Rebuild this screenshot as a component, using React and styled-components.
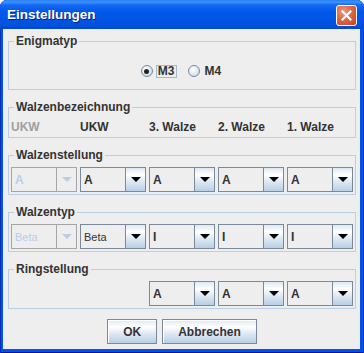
import React from 'react';
import styled, { createGlobalStyle } from 'styled-components';

const GlobalStyle = createGlobalStyle`
  html, body {
    margin: 0;
    padding: 0;
    background: #ffffff;
  }
  body {
    font-family: "Liberation Sans", Arial, sans-serif;
  }
`;

const Window = styled.div`
  width: 364px;
  height: 353px;
  box-sizing: border-box;
  display: flex;
  flex-direction: column;
  border-radius: 7px 7px 0 0;
  overflow: hidden;
  background: #0052e8;
  box-shadow: inset 1px 0 0 #0a2fb8, inset -1px 0 0 #0a2fb8, inset 0 -1px 0 #00168c;
`;

const TitleBar = styled.div`
  height: 29px;
  flex-shrink: 0;
  display: flex;
  justify-content: space-between;
  padding: 0 7px;
  background: linear-gradient(
    to bottom,
    #2a7cf0 0px,
    #3d92ff 2px,
    #1468f2 5px,
    #0058ea 12px,
    #0055e4 20px,
    #0050dc 26px,
    #0046cc 29px
  );
`;

const Title = styled.span`
  margin-top: 7px;
  font-weight: bold;
  font-size: 13.5px;
  line-height: 15px;
  color: #ffffff;
  text-shadow: 1px 1px 0 #0a1f8c;
`;

const CloseButton = styled.div`
  margin-top: 5px;
  width: 21px;
  height: 21px;
  box-sizing: border-box;
  border: 1px solid #ffffff;
  border-radius: 3px;
  background: radial-gradient(circle at 35% 30%, #ec9a80 0%, #dd6846 45%, #c4411f 100%);
  display: flex;
  align-items: center;
  justify-content: center;
`;

const Client = styled.div`
  flex: 1;
  margin: 0 4px 4px 3px;
  background: #eeeeee;
  padding: 5px 4px 0 5px;
  display: flex;
  flex-direction: column;
  gap: 10px;
`;

const Group = styled.fieldset`
  margin: 0;
  min-width: 0;
  padding: 5px 2px 2px 2px;
  border: 1px solid #b8cfe5;
`;

const Legend = styled.legend`
  margin-left: 3px;
  padding: 0 2px;
  font-weight: bold;
  font-size: 12px;
  line-height: 14px;
  color: #333333;
`;

const RadioRow = styled.div`
  height: 34px;
  box-sizing: border-box;
  padding-top: 2px;
  display: flex;
  align-items: center;
  justify-content: center;
  gap: 11px;
`;

const RadioItem = styled.label`
  display: flex;
  align-items: center;
  gap: 3px;
`;

const RadioCircle = styled.span`
  width: 12px;
  height: 12px;
  box-sizing: border-box;
  border-radius: 50%;
  border: 1px solid #7a8a99;
  background: radial-gradient(circle at 40% 35%, #ffffff 0%, #e4ecf5 45%, #b8cfe5 100%);
  display: flex;
  align-items: center;
  justify-content: center;
`;

const RadioDot = styled.span`
  width: 5px;
  height: 5px;
  border-radius: 50%;
  background: #222222;
`;

const RadioText = styled.span`
  padding: 0 1px;
  border: 1px solid ${(p) => (p.$focused ? '#a3b8cc' : 'transparent')};
  font-weight: bold;
  font-size: 12px;
  line-height: 11px;
  color: #333333;
`;

const Columns = styled.div`
  display: grid;
  grid-template-columns: repeat(5, 66px);
  column-gap: 3px;
`;

const ColumnLabel = styled.span`
  font-weight: bold;
  font-size: 12px;
  line-height: 16px;
  color: ${(p) => (p.$disabled ? '#a0a0a0' : '#333333')};
  white-space: nowrap;
`;

const Combo = styled.div`
  grid-column-start: ${(p) => p.$col || 'auto'};
  height: 25px;
  box-sizing: border-box;
  border: 1px solid ${(p) => (p.$disabled ? '#a6a6a6' : '#7a8a99')};
  background: #eeeeee;
  display: flex;
`;

const ComboValue = styled.div`
  flex: 1;
  padding-left: 3px;
  display: flex;
  align-items: center;
  font-weight: ${(p) => (p.$plain ? 'normal' : 'bold')};
  font-size: ${(p) => (p.$plain ? '11px' : '12px')};
  color: ${(p) => (p.$disabled ? '#b8cfe5' : '#333333')};
`;

const ArrowButton = styled.div`
  width: 19px;
  flex-shrink: 0;
  border-left: 1px solid ${(p) => (p.$disabled ? '#a6a6a6' : '#7a8a99')};
  background: ${(p) =>
    p.$disabled
      ? '#eeeeee'
      : 'linear-gradient(to bottom, #dde8f3 0%, #ffffff 30%, #dde8f3 60%, #b8cfe5 100%)'};
  display: flex;
  align-items: center;
  justify-content: center;
`;

const Arrow = styled.span`
  width: 0;
  height: 0;
  border-left: 5px solid transparent;
  border-right: 5px solid transparent;
  border-top: 5px solid ${(p) => (p.$disabled ? '#b8cfe5' : '#000000')};
`;

const ButtonRow = styled.div`
  display: flex;
  justify-content: center;
  gap: 5px;
`;

const Button = styled.button`
  height: 25px;
  padding: 0 15px;
  box-sizing: border-box;
  border: 1px solid #7a8a99;
  border-radius: 0;
  background: linear-gradient(to bottom, #dde8f3 0%, #ffffff 30%, #dde8f3 60%, #b8cfe5 100%);
  box-shadow: inset 1px 1px 0 #ffffff;
  font-family: "Liberation Sans", Arial, sans-serif;
  font-weight: bold;
  font-size: 12px;
  color: #333333;
`;

const ComboBox = ({ value, disabled, plain, col }) => (
  <Combo $disabled={disabled} $col={col}>
    <ComboValue $disabled={disabled} $plain={plain}>{value}</ComboValue>
    <ArrowButton $disabled={disabled}>
      <Arrow $disabled={disabled} />
    </ArrowButton>
  </Combo>
);

const labels = ['UKW', 'UKW', '3. Walze', '2. Walze', '1. Walze'];

const App = () => (
  <>
    <GlobalStyle />
    <Window>
      <TitleBar>
        <Title>Einstellungen</Title>
        <CloseButton>
          <svg width="11" height="11" viewBox="0 0 11 11">
            <path d="M1.5 1.5 L9.5 9.5 M9.5 1.5 L1.5 9.5" stroke="#ffffff" strokeWidth="2" strokeLinecap="square" />
          </svg>
        </CloseButton>
      </TitleBar>
      <Client>
        <Group>
          <Legend>Enigmatyp</Legend>
          <RadioRow>
            <RadioItem>
              <RadioCircle>
                <RadioDot />
              </RadioCircle>
              <RadioText $focused>M3</RadioText>
            </RadioItem>
            <RadioItem>
              <RadioCircle />
              <RadioText>M4</RadioText>
            </RadioItem>
          </RadioRow>
        </Group>

        <Group>
          <Legend>Walzenbezeichnung</Legend>
          <Columns>
            {labels.map((l, i) => (
              <ColumnLabel key={i} $disabled={i === 0}>{l}</ColumnLabel>
            ))}
          </Columns>
        </Group>

        <Group>
          <Legend>Walzenstellung</Legend>
          <Columns>
            <ComboBox value="A" disabled />
            <ComboBox value="A" />
            <ComboBox value="A" />
            <ComboBox value="A" />
            <ComboBox value="A" />
          </Columns>
        </Group>

        <Group>
          <Legend>Walzentyp</Legend>
          <Columns>
            <ComboBox value="Beta" plain disabled />
            <ComboBox value="Beta" plain />
            <ComboBox value="I" />
            <ComboBox value="I" />
            <ComboBox value="I" />
          </Columns>
        </Group>

        <Group>
          <Legend>Ringstellung</Legend>
          <Columns>
            <ComboBox value="A" col={3} />
            <ComboBox value="A" />
            <ComboBox value="A" />
          </Columns>
        </Group>

        <ButtonRow>
          <Button>OK</Button>
          <Button>Abbrechen</Button>
        </ButtonRow>
      </Client>
    </Window>
  </>
);

export default App;
